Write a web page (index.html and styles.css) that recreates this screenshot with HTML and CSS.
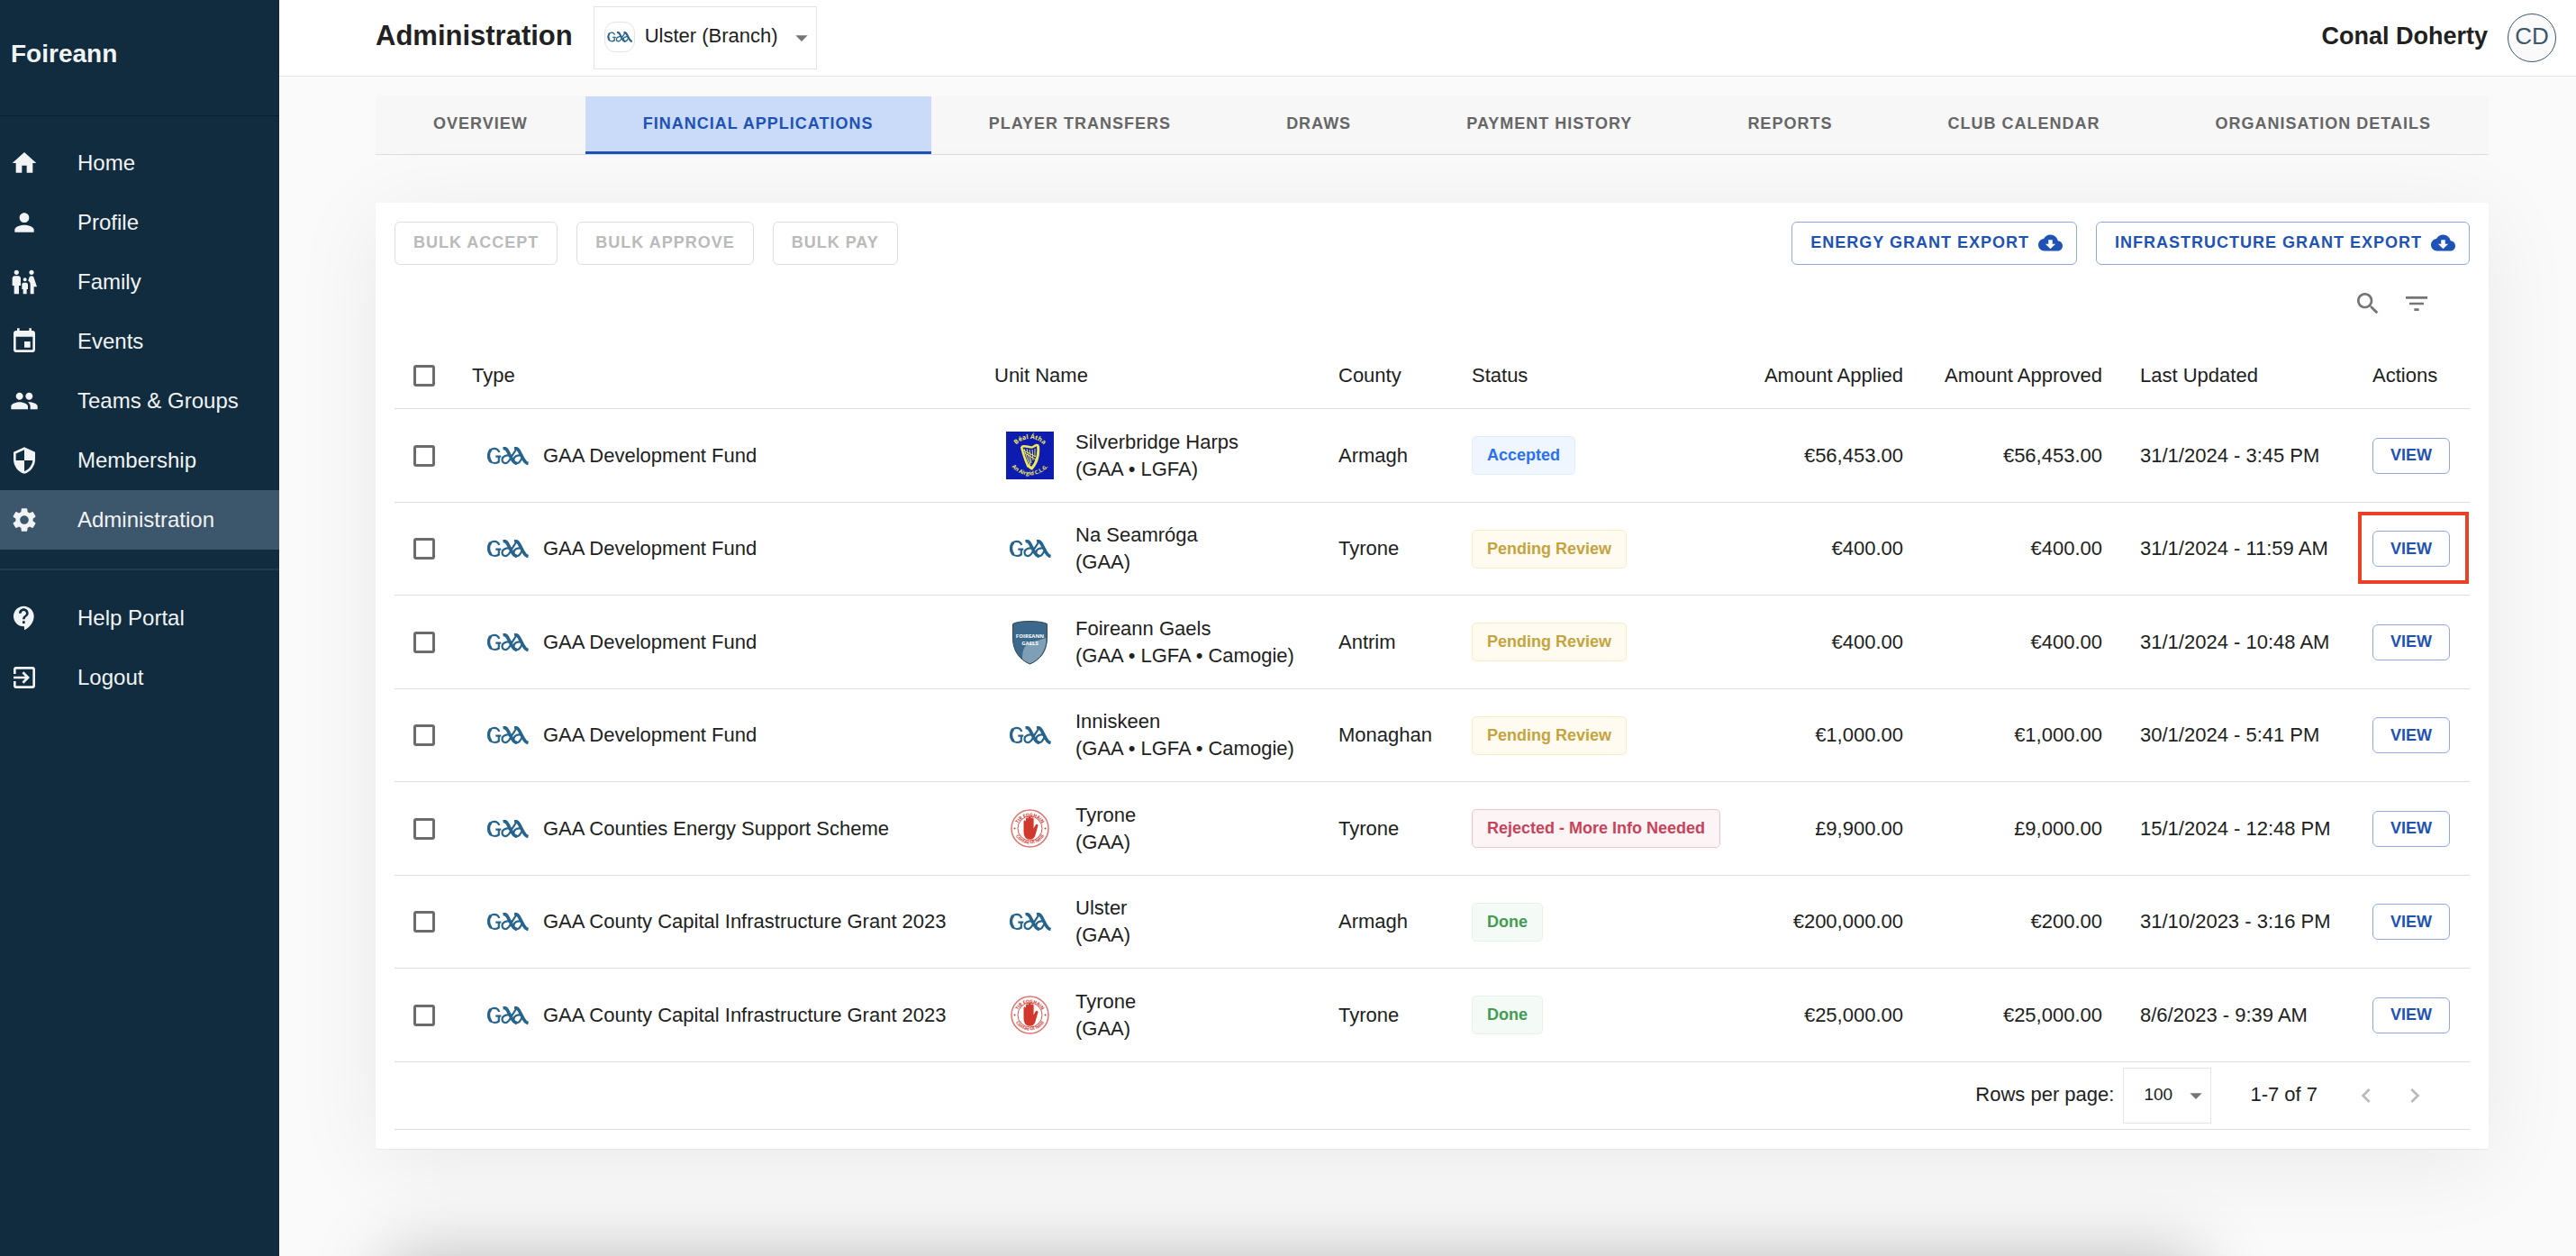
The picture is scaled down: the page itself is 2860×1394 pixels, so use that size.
FILE: index.html
```html
<!DOCTYPE html>
<html lang="en">
<head>
<meta charset="utf-8">
<meta name="viewport" content="width=device-width, initial-scale=1">
<title>Foireann – Administration</title>
<link rel="stylesheet" href="styles.css">
</head>
<body>
<svg class="sprite" aria-hidden="true">
  <symbol id="home" viewBox="0 0 24 24"><path d="M10 20v-6h4v6h5v-8h3L12 3 2 12h3v8z"/></symbol>
  <symbol id="person" viewBox="0 0 24 24"><path d="M12 12c2.21 0 4-1.79 4-4s-1.79-4-4-4-4 1.790-4 4 1.790 4 4 4zm0 2c-2.670 0-8 1.340-8 4v2h16v-2c0-2.660-5.330-4-8-4z"/></symbol>
  <symbol id="family" viewBox="0 0 24 24"><path d="M16 4c0-1.11.89-2 2-2s2 .89 2 2-.89 2-2 2-2-.89-2-2zm4 18v-6h2.500l-2.540-7.630C19.680 7.550 18.920 7 18.060 7h-.12c-.86 0-1.630.55-1.900 1.370l-.86 2.580c1.080.600 1.820 1.730 1.820 3.050v8h3zm-7.500-10.500c.83 0 1.500-.67 1.500-1.500s-.67-1.500-1.500-1.500S11 9.170 11 10s.67 1.500 1.500 1.500zM5.500 6c1.110 0 2-.89 2-2s-.89-2-2-2-2 .89-2 2 .89 2 2 2zm2 16v-7H9V9c0-1.100-.9-2-2-2H4c-1.100 0-2 .9-2 2v6h1.500v7h4zm6.500 0v-4h1v-4c0-.82-.68-1.500-1.500-1.500h-2c-.82 0-1.500.68-1.500 1.500v4h1v4h3z"/></symbol>
  <symbol id="events" viewBox="0 0 24 24"><path d="M17 12h-5v5h5v-5zM16 1v2H8V1H6v2H5c-1.110 0-1.990.9-1.990 2L3 19c0 1.100.89 2 2 2h14c1.100 0 2-.9 2-2V5c0-1.100-.9-2-2-2h-1V1h-2zm3 18H5V8h14v11z"/></symbol>
  <symbol id="people" viewBox="0 0 24 24"><path d="M16 11c1.660 0 2.990-1.340 2.990-3S17.660 5 16 5c-1.660 0-3 1.340-3 3s1.340 3 3 3zm-8 0c1.660 0 2.990-1.340 2.990-3S9.660 5 8 5C6.340 5 5 6.340 5 8s1.340 3 3 3zm0 2c-2.330 0-7 1.170-7 3.500V19h14v-2.500c0-2.330-4.670-3.500-7-3.500zm8 0c-.29 0-.62.02-.97.05 1.160.84 1.970 1.970 1.970 3.450V19h6v-2.500c0-2.330-4.670-3.500-7-3.500z"/></symbol>
  <symbol id="shield" viewBox="0 0 24 24"><path d="M12 1L3 5v6c0 5.550 3.840 10.740 9 12 5.160-1.260 9-6.450 9-12V5l-9-4zm0 10.990h7c-.53 4.120-3.280 7.790-7 8.940V12H5V6.300l7-3.110v8.800z"/></symbol>
  <symbol id="gear" viewBox="0 0 24 24"><path d="M19.140 12.940c.04-.3.06-.61.06-.94 0-.32-.02-.64-.07-.94l2.030-1.580c.18-.14.23-.41.12-.61l-1.920-3.320c-.12-.22-.37-.29-.59-.22l-2.390.96c-.5-.38-1.030-.7-1.620-.94l-.36-2.540c-.04-.24-.24-.41-.48-.41h-3.840c-.24 0-.43.17-.47.41l-.36 2.540c-.59.24-1.130.57-1.620.94l-2.390-.96c-.22-.08-.47 0-.59.22L2.740 8.870c-.12.21-.08.47.12.61l2.030 1.580c-.05.3-.09.63-.09.94s.02.64.07.94l-2.030 1.580c-.18.14-.23.41-.12.61l1.920 3.320c.12.22.37.29.59.22l2.390-.96c.5.38 1.030.7 1.620.94l.36 2.540c.05.24.24.41.48.41h3.840c.24 0 .44-.17.47-.41l.36-2.540c.59-.24 1.130-.56 1.620-.94l2.390.96c.22.08.47 0 .59-.22l1.920-3.320c.12-.22.07-.47-.12-.61l-2.010-1.580zM12 15.600c-1.980 0-3.600-1.620-3.600-3.600s1.620-3.600 3.600-3.600 3.600 1.620 3.600 3.600-1.620 3.600-3.600 3.600z"/></symbol>
  <symbol id="help" viewBox="0 0 24 24"><path d="M11.500 2C6.810 2 3 5.810 3 10.500S6.810 19 11.500 19h.5v3c4.860-2.340 8-7 8-11.500C20 5.810 16.190 2 11.500 2zm1 14.500h-2v-2h2v2zm0-3.500h-2c0-3.250 3-3 3-5 0-1.100-.9-2-2-2s-2 .9-2 2h-2c0-2.210 1.790-4 4-4s4 1.790 4 4c0 2.500-3 2.750-3 5z"/></symbol>
  <symbol id="logout" viewBox="0 0 24 24"><path d="M10.090 15.590L11.500 17l5-5-5-5-1.410 1.410L12.670 11H3v2h9.670l-2.580 2.590zM19 3H5c-1.110 0-2 .9-2 2v4h2V5h14v14H5v-4H3v4c0 1.100.89 2 2 2h14c1.100 0 2-.9 2-2V5c0-1.100-.9-2-2-2z"/></symbol>
  <symbol id="cloud" viewBox="0 0 24 24"><path d="M19.350 10.040C18.670 6.590 15.640 4 12 4 9.110 4 6.600 5.640 5.350 8.040 2.340 8.360 0 10.910 0 14c0 3.310 2.690 6 6 6h13c2.760 0 5-2.240 5-5 0-2.640-2.050-4.780-4.650-4.960zM17 13l-5 5-5-5h3V9h4v4h3z"/></symbol>
  <symbol id="search" viewBox="0 0 24 24"><path d="M15.500 14h-.79l-.28-.27C15.410 12.590 16 11.110 16 9.500 16 5.910 13.090 3 9.500 3S3 5.910 3 9.500 5.910 16 9.500 16c1.610 0 3.090-.59 4.230-1.570l.27.28v.79l5 4.990L20.490 19l-4.990-5zm-6 0C7.010 14 5 11.990 5 9.500S7.010 5 9.500 5 14 7.010 14 9.500 11.990 14 9.500 14z"/></symbol>
  <symbol id="filter" viewBox="0 0 24 24"><path d="M10 18h4v-2h-4v2zM3 6v2h18V6H3zm3 7h12v-2H6v2z"/></symbol>
  <symbol id="down" viewBox="0 0 24 24"><path d="M7 10l5 5 5-5z"/></symbol>
  <symbol id="left" viewBox="0 0 24 24"><path d="M15.410 7.410L14 6l-6 6 6 6 1.410-1.410L10.830 12z"/></symbol>
  <symbol id="right" viewBox="0 0 24 24"><path d="M10 6L8.590 7.410 13.170 12l-4.580 4.590L10 18l6-6z"/></symbol>

  <symbol id="gaa" viewBox="0 0 48 20">
    <g fill="none" stroke="#26638d">
      <path d="M14.800 6C13.800 3 11.800 1.800 9.200 1.800 5 1.800 2.600 5.300 2.600 9.800s2.700 8.200 7 8.200c2 0 3.600-.6 4.800-1.500" stroke-width="2.200"/>
      <path d="M5.500 3.200C2.300 6.500 2.300 13 5.700 16.600" stroke-width="3.200"/>
      <path d="M14.300 17.300v-6.500M10.800 10.700h6" stroke-width="2.200"/>
      <path d="M19 1.400c3-.3 4 1 5 3l5 9.500c1.200 2.300 2.300 4 5.500 4.700" stroke-width="3.600"/>
      <path d="M27 9.800c-4.500-1.300-9 .8-9 4.300 0 2.500 1.700 4 3.800 4 3.400 0 5-4 7-8L33.500 3" stroke-width="2.200"/>
      <path d="M31.500 1.400c3-.3 4 1 5.200 3l5 9.500c1.200 2.300 2.300 4 5.300 4.700" stroke-width="3.600"/>
      <path d="M39.500 9.800c-4-1.300-8.300.6-8.700 4.300-.2 2.500 1.700 4 3.800 4 3 0 4.400-3.500 6-7" stroke-width="2.200"/>
    </g>
  </symbol>

  <symbol id="hand" viewBox="0 0 53 53">
    <circle cx="26.500" cy="26.500" r="20.500" fill="#fff" stroke="#e0726c" stroke-width="1.500"/>
    <circle cx="26.500" cy="26.500" r="13.500" fill="none" stroke="#d9534b" stroke-width="1"/>
    <circle cx="9.500" cy="26.500" r="1" fill="#d3382d"/><circle cx="43.500" cy="26.500" r="1" fill="#d3382d"/>
    <path fill="#d3382d" d="M19.500 29V19c0-2 2.500-2 2.500 0v-3c0-2 2.800-2 2.800 0v-1.500c0-2 2.900-2 2.900 0V16c0-2 2.900-2 2.900 0v10.500l2.200-4c1.200-1.700 3.200-.6 2.600 1.200l-2.600 9c-1 4-3 6-6.500 6-4.800 0-6.800-3.500-6.800-9.700z"/>
  </symbol>

  <defs>
    <path id="harps-top" d="M10 16a21 21 0 0 1 33 0"/>
    <path id="harps-base" d="M5 37a26 26 0 0 0 43 0"/>
    <path id="tyrone-top" d="M11.500 28a15 15 0 1 1 30 0"/>
    <path id="tyrone-base" d="M8 25a18.500 18.500 0 0 0 37 0"/>
  </defs>
</svg>

<div class="app">
  <aside class="sidebar">
    <div class="brand">Foireann</div>
    <nav class="menu" aria-label="Main">
      <a href="#"><svg><use href="#home"/></svg>Home</a>
      <a href="#"><svg><use href="#person"/></svg>Profile</a>
      <a href="#"><svg><use href="#family"/></svg>Family</a>
      <a href="#"><svg><use href="#events"/></svg>Events</a>
      <a href="#"><svg><use href="#people"/></svg>Teams &amp; Groups</a>
      <a href="#"><svg><use href="#shield"/></svg>Membership</a>
      <a href="#" class="current" aria-current="page"><svg><use href="#gear"/></svg>Administration</a>
    </nav>
    <nav class="menu menu-secondary" aria-label="Account">
      <a href="#"><svg><use href="#help"/></svg>Help Portal</a>
      <a href="#"><svg><use href="#logout"/></svg>Logout</a>
    </nav>
  </aside>

  <div class="page">
    <header class="topbar">
      <h1>Administration</h1>
      <div class="select unit-select">
        <span class="unit-badge"><svg><use href="#gaa"/></svg></span>
        <select aria-label="Unit"><option>Ulster (Branch)</option></select>
        <svg class="arrow"><use href="#down"/></svg>
      </div>
      <div class="user">
        <span class="user-name">Conal Doherty</span>
        <span class="avatar">CD</span>
      </div>
    </header>

    <main class="content">
      <nav class="tabs" aria-label="Administration">
        <a href="#">OVERVIEW</a>
        <a href="#" class="current" aria-current="page">FINANCIAL APPLICATIONS</a>
        <a href="#">PLAYER TRANSFERS</a>
        <a href="#">DRAWS</a>
        <a href="#">PAYMENT HISTORY</a>
        <a href="#">REPORTS</a>
        <a href="#">CLUB CALENDAR</a>
        <a href="#">ORGANISATION DETAILS</a>
      </nav>

      <section class="card">
        <div class="actions">
          <button class="btn" disabled>BULK ACCEPT</button>
          <button class="btn" disabled>BULK APPROVE</button>
          <button class="btn" disabled>BULK PAY</button>
          <button class="btn export first-export">ENERGY GRANT EXPORT<svg><use href="#cloud"/></svg></button>
          <button class="btn export">INFRASTRUCTURE GRANT EXPORT<svg><use href="#cloud"/></svg></button>
        </div>

        <div class="toolbar">
          <button class="icon-btn" aria-label="Search"><svg><use href="#search"/></svg></button>
          <button class="icon-btn" aria-label="Filter"><svg><use href="#filter"/></svg></button>
        </div>

        <table class="grid">
          <colgroup>
            <col class="c-check"><col><col class="c-unit"><col class="c-county"><col class="c-status">
            <col class="c-applied"><col class="c-approved"><col class="c-updated"><col class="c-actions">
          </colgroup>
          <thead>
            <tr>
              <th><input type="checkbox" aria-label="Select all"></th>
              <th>Type</th><th>Unit Name</th><th>County</th><th>Status</th>
              <th class="num">Amount Applied</th><th class="num">Amount Approved</th>
              <th>Last Updated</th><th>Actions</th>
            </tr>
          </thead>
          <tbody>
            <tr>
              <td><input type="checkbox" aria-label="Select row 1"></td>
              <td><div class="type"><svg class="mark"><use href="#gaa"/></svg>GAA Development Fund</div></td>
              <td>
                <div class="unit">
                  <svg class="crest" viewBox="0 0 53 53">
                    <path fill="#0d1bb0" d="M0 0h53v53H0z"/>
                    <g fill="none" stroke="#f1ea58" stroke-linejoin="round">
                      <path stroke-width="2.500" d="M17 17c5-3 9 2 13 0 3-2 4-3 6-1"/>
                      <path stroke-width="3" d="M35.500 16c1 9-1 18-7 25l-4-3"/>
                      <path stroke-width="2.500" d="M17 17c2 8 4 14 7.500 22"/>
                      <path stroke-width="1" d="M20 19l6 19M23 19l4 18M26 20l2 15M29 20l1 12M32 19v9M19 23l14 8M18 20l15 8"/>
                    </g>
                    <g fill="#f1ea58" text-anchor="middle">
                      <text font-size="7"><textPath href="#harps-top" startOffset="50%">Béal Átha</textPath></text>
                      <text font-size="6"><textPath href="#harps-base" startOffset="50%">An Airgid C.L.G.</textPath></text>
                    </g>
                  </svg>
                  <div>Silverbridge Harps<br>(GAA • LGFA)</div>
                </div>
              </td>
              <td>Armagh</td>
              <td><span class="chip accepted">Accepted</span></td>
              <td class="num">€56,453.00</td><td class="num">€56,453.00</td>
              <td>31/1/2024 - 3:45 PM</td>
              <td><button class="btn view">VIEW</button></td>
            </tr>
            <tr>
              <td><input type="checkbox" aria-label="Select row 2"></td>
              <td><div class="type"><svg class="mark"><use href="#gaa"/></svg>GAA Development Fund</div></td>
              <td><div class="unit"><svg class="mark"><use href="#gaa"/></svg><div>Na Seamróga<br>(GAA)</div></div></td>
              <td>Tyrone</td>
              <td><span class="chip pending">Pending Review</span></td>
              <td class="num">€400.00</td><td class="num">€400.00</td>
              <td>31/1/2024 - 11:59 AM</td>
              <td><div class="marked"><button class="btn view">VIEW</button></div></td>
            </tr>
            <tr>
              <td><input type="checkbox" aria-label="Select row 3"></td>
              <td><div class="type"><svg class="mark"><use href="#gaa"/></svg>GAA Development Fund</div></td>
              <td>
                <div class="unit">
                  <svg class="crest" viewBox="0 0 53 53">
                    <path fill="#3c688c" d="M7.500 6.500C13 2.500 39 2.500 45.500 6.500V22c0 14-7 24-19 29C14.500 46 7.500 36 7.500 22z"/>
                    <path fill="#7f9fb6" d="M18 46c0-12 3-18 12-20 7-1 10-3 14.500-4C45 35 38 46 26.500 50.500 23 49.500 20 48 18 46z"/>
                    <path fill="none" stroke="#2f4656" d="M7.500 6.500C13 2.500 39 2.500 45.500 6.500V22c0 14-7 24-19 29C14.500 46 7.500 36 7.500 22z"/>
                    <g fill="#fff" text-anchor="middle" font-size="6">
                      <text x="26.500" y="22">FOIREANN</text><text x="26.500" y="30">GAELS</text>
                    </g>
                  </svg>
                  <div>Foireann Gaels<br>(GAA • LGFA • Camogie)</div>
                </div>
              </td>
              <td>Antrim</td>
              <td><span class="chip pending">Pending Review</span></td>
              <td class="num">€400.00</td><td class="num">€400.00</td>
              <td>31/1/2024 - 10:48 AM</td>
              <td><button class="btn view">VIEW</button></td>
            </tr>
            <tr>
              <td><input type="checkbox" aria-label="Select row 4"></td>
              <td><div class="type"><svg class="mark"><use href="#gaa"/></svg>GAA Development Fund</div></td>
              <td><div class="unit"><svg class="mark"><use href="#gaa"/></svg><div>Inniskeen<br>(GAA • LGFA • Camogie)</div></div></td>
              <td>Monaghan</td>
              <td><span class="chip pending">Pending Review</span></td>
              <td class="num">€1,000.00</td><td class="num">€1,000.00</td>
              <td>30/1/2024 - 5:41 PM</td>
              <td><button class="btn view">VIEW</button></td>
            </tr>
            <tr>
              <td><input type="checkbox" aria-label="Select row 5"></td>
              <td><div class="type"><svg class="mark"><use href="#gaa"/></svg>GAA Counties Energy Support Scheme</div></td>
              <td>
                <div class="unit">
                  <svg class="crest" viewBox="0 0 53 53">
                    <use href="#hand"/>
                    <g fill="#d3382d" text-anchor="middle" font-size="5">
                      <text><textPath href="#tyrone-top" startOffset="50%">TIR EOGHAIN</textPath></text>
                      <text><textPath href="#tyrone-base" startOffset="50%">Contae Uí Néill</textPath></text>
                    </g>
                  </svg>
                  <div>Tyrone<br>(GAA)</div>
                </div>
              </td>
              <td>Tyrone</td>
              <td><span class="chip rejected">Rejected - More Info Needed</span></td>
              <td class="num">£9,900.00</td><td class="num">£9,000.00</td>
              <td>15/1/2024 - 12:48 PM</td>
              <td><button class="btn view">VIEW</button></td>
            </tr>
            <tr>
              <td><input type="checkbox" aria-label="Select row 6"></td>
              <td><div class="type"><svg class="mark"><use href="#gaa"/></svg>GAA County Capital Infrastructure Grant 2023</div></td>
              <td><div class="unit"><svg class="mark"><use href="#gaa"/></svg><div>Ulster<br>(GAA)</div></div></td>
              <td>Armagh</td>
              <td><span class="chip done">Done</span></td>
              <td class="num">€200,000.00</td><td class="num">€200.00</td>
              <td>31/10/2023 - 3:16 PM</td>
              <td><button class="btn view">VIEW</button></td>
            </tr>
            <tr>
              <td><input type="checkbox" aria-label="Select row 7"></td>
              <td><div class="type"><svg class="mark"><use href="#gaa"/></svg>GAA County Capital Infrastructure Grant 2023</div></td>
              <td>
                <div class="unit">
                  <svg class="crest" viewBox="0 0 53 53">
                    <use href="#hand"/>
                    <g fill="#d3382d" text-anchor="middle" font-size="5">
                      <text><textPath href="#tyrone-top" startOffset="50%">TIR EOGHAIN</textPath></text>
                      <text><textPath href="#tyrone-base" startOffset="50%">Contae Uí Néill</textPath></text>
                    </g>
                  </svg>
                  <div>Tyrone<br>(GAA)</div>
                </div>
              </td>
              <td>Tyrone</td>
              <td><span class="chip done">Done</span></td>
              <td class="num">€25,000.00</td><td class="num">€25,000.00</td>
              <td>8/6/2023 - 9:39 AM</td>
              <td><button class="btn view">VIEW</button></td>
            </tr>
          </tbody>
        </table>

        <div class="pager">
          <label for="rows">Rows per page:</label>
          <div class="select rows-select">
            <select id="rows"><option>100</option></select>
            <svg class="arrow"><use href="#down"/></svg>
          </div>
          <span class="range">1-7 of 7</span>
          <button class="icon-btn" aria-label="Previous page" disabled><svg><use href="#left"/></svg></button>
          <button class="icon-btn" aria-label="Next page" disabled><svg><use href="#right"/></svg></button>
        </div>
      </section>
    </main>
  </div>
</div>
</body>
</html>
```
FILE: styles.css
```css
* { box-sizing: border-box; }

body {
  margin: 0;
  background: #fafafa;
  color: #212121;
  font-family: "Liberation Sans", Arial, sans-serif;
  font-size: 22px;
  line-height: 30px;
}

a { color: inherit; text-decoration: none; }

button, select, input { font: inherit; color: inherit; margin: 0; }

svg { display: block; flex: none; fill: currentColor; }

.sprite { position: absolute; width: 0; height: 0; }

.app {
  display: grid;
  grid-template-columns: 310px minmax(0, 1fr);
  min-height: 100vh;
}

/* Sidebar */

.sidebar {
  position: relative;
  z-index: 1;
  background: #102c3e;
  color: #f1f3f5;
}

.brand {
  display: flex;
  align-items: center;
  height: 129px;
  padding: 0 12px 8px;
  border-bottom: 1px solid #0a1e2b;
  font-size: 28px;
  font-weight: bold;
}

.menu {
  padding: 19px 0 21px;
  font-size: 24px;
}

.menu-secondary {
  padding-top: 20px;
  border-top: 2px solid #203b4d;
}

.menu a {
  display: flex;
  align-items: center;
  gap: 43px;
  height: 66px;
  padding-left: 11px;
}

.menu svg { width: 32px; height: 32px; }

.menu .current { background: #3c566b; }

/* Top bar */

.page {
  position: relative;
  min-width: 0;
}

/* Soft shadow rising from the bottom edge of the window */
.page::after {
  content: "";
  position: fixed;
  top: 100%;
  left: 430px;
  right: 420px;
  height: 100px;
  box-shadow: 0 0 80px rgba(0, 0, 0, 0.25);
  pointer-events: none;
}

.topbar {
  display: flex;
  align-items: center;
  gap: 23px;
  height: 85px;
  padding: 0 22px 0 107px;
  border-bottom: 1px solid #e4e4e4;
  background: #fff;
}

.topbar h1 {
  margin: 0;
  padding-bottom: 4px;
  font-size: 31px;
}

.user {
  display: flex;
  align-items: center;
  gap: 22px;
  margin-left: auto;
}

.user-name {
  padding-bottom: 4px;
  font-size: 27px;
  font-weight: bold;
}

.avatar {
  display: flex;
  align-items: center;
  justify-content: center;
  width: 54px;
  height: 54px;
  padding-bottom: 4px;
  border: 1px solid #3c566b;
  border-radius: 50%;
  background: #fafafa;
  color: #3c566b;
  font-size: 26px;
}

.select { position: relative; }

.select select {
  display: block;
  width: 100%;
  border: 1px solid #e4e4e4;
  border-radius: 0;
  background: #fff;
  appearance: none;
}

.arrow {
  position: absolute;
  top: 50%;
  right: 1px;
  width: 32px;
  height: 32px;
  margin-top: -16px;
  color: #757575;
  pointer-events: none;
}

.unit-select { width: 248px; }

.unit-select select {
  height: 70px;
  padding: 0 40px 4px 56px;
}

.unit-badge {
  position: absolute;
  top: 17px;
  left: 12px;
  display: flex;
  align-items: center;
  justify-content: center;
  width: 34px;
  height: 34px;
  border: 1px solid #e4e4e4;
  border-radius: 12px;
  pointer-events: none;
}

.unit-badge svg { width: 30px; height: 12px; }

/* Tabs */

.content { padding: 22px 97px 0 107px; }

.tabs {
  display: flex;
  border-bottom: 1px solid #dedede;
  background: #f7f7f7;
  color: #666;
  font-size: 18px;
  font-weight: bold;
  letter-spacing: 1px;
}

.tabs a {
  flex: 1 1 auto;
  padding: 15px 32px 16px;
  border-bottom: 3px solid transparent;
  text-align: center;
  white-space: nowrap;
}

.tabs .current {
  border-color: #1e52b5;
  background: #c9dbf8;
  color: #1e52b5;
}

/* Card */

.card {
  margin-top: 53px;
  padding: 21px;
  border-radius: 2px;
  background: #fff;
  box-shadow: 0 1px 1px rgba(0, 0, 0, 0.05), 0 16px 100px rgba(0, 0, 0, 0.07);
}

.actions {
  display: flex;
  gap: 21px;
}

.btn {
  display: flex;
  align-items: center;
  height: 48px;
  padding: 0 20px 2px;
  border: 1px solid #8ea9da;
  border-radius: 6px;
  background: #fff;
  color: #1e52b5;
  font-size: 18px;
  font-weight: bold;
  letter-spacing: 1px;
  white-space: nowrap;
}

.btn:disabled {
  border-color: #dedede;
  color: #bababa;
}

.export { padding-right: 15px; gap: 10px; }

.export svg { width: 27px; height: 27px; }

.first-export { margin-left: auto; }

.toolbar {
  display: flex;
  align-items: center;
  justify-content: flex-end;
  height: 86px;
  padding-right: 32px;
}

.icon-btn {
  display: flex;
  align-items: center;
  justify-content: center;
  width: 54px;
  height: 54px;
  padding: 0;
  border: 0;
  background: none;
  color: #757575;
}

.icon-btn:disabled { color: #b9b9b9; }

.icon-btn svg { width: 32px; height: 32px; }

/* Table */

.grid {
  width: 100%;
  border-collapse: separate;
  border-spacing: 0;
  table-layout: fixed;
}

.c-check { width: 65px; }
.c-unit { width: 382px; }
.c-county { width: 148px; }
.c-status { width: 300px; }
.c-applied { width: 221px; }
.c-approved { width: 221px; }
.c-updated { width: 258px; }
.c-actions { width: 129px; }

th, td {
  height: 103px;
  padding: 0 21px;
  border-bottom: 1px solid #dedede;
  font-weight: normal;
  text-align: left;
  white-space: nowrap;
}

th { height: 74px; }

tbody tr:nth-child(odd) td { height: 104px; }

.num { text-align: right; }

input[type="checkbox"] {
  display: block;
  width: 24px;
  height: 24px;
  border: 3px solid #6b6b6b;
  border-radius: 3px;
  background: #fff;
  appearance: none;
}

.type, .unit {
  display: flex;
  align-items: center;
  gap: 15px;
  padding-left: 15px;
}

.unit { gap: 26px; }

.mark { width: 49px; height: 20px; }

.crest {
  width: 53px;
  height: 53px;
  margin: 0 -2px;
  font-family: "Open Sans", sans-serif;
  font-weight: bold;
}

.chip {
  display: inline-block;
  padding: 5px 16px 6px;
  border: 1px solid;
  border-radius: 5px;
  font-size: 18px;
  font-weight: bold;
}

.accepted { border-color: #e1ecfd; background: #f0f6ff; color: #2b6ff2; }
.pending { border-color: #f8ecc2; background: #fffbf1; color: #c5a43d; }
.rejected { border-color: #f0c3c9; background: #fdf4f5; color: #c8435a; }
.done { border-color: #e6f4e8; background: #f4faf5; color: #439c52; }

.view {
  height: 40px;
  padding: 0 19px 1px;
  letter-spacing: normal;
}

/* Call-out round the action to follow */
.marked { position: relative; }

.marked::after {
  content: "";
  position: absolute;
  inset: -21px -20px -19px -16px;
  border: 4px solid #ea4025;
  pointer-events: none;
}

.pager {
  display: flex;
  align-items: center;
  justify-content: flex-end;
  height: 75px;
  padding-right: 34px;
  border-bottom: 1px solid #dedede;
}

.pager label, .range { padding-bottom: 3px; }

.rows-select {
  width: 98px;
  margin: 0 43px 0 10px;
}

.rows-select select {
  height: 62px;
  padding: 0 40px 3px 22px;
  font-size: 19px;
}

.range { margin-right: 27px; }
```
